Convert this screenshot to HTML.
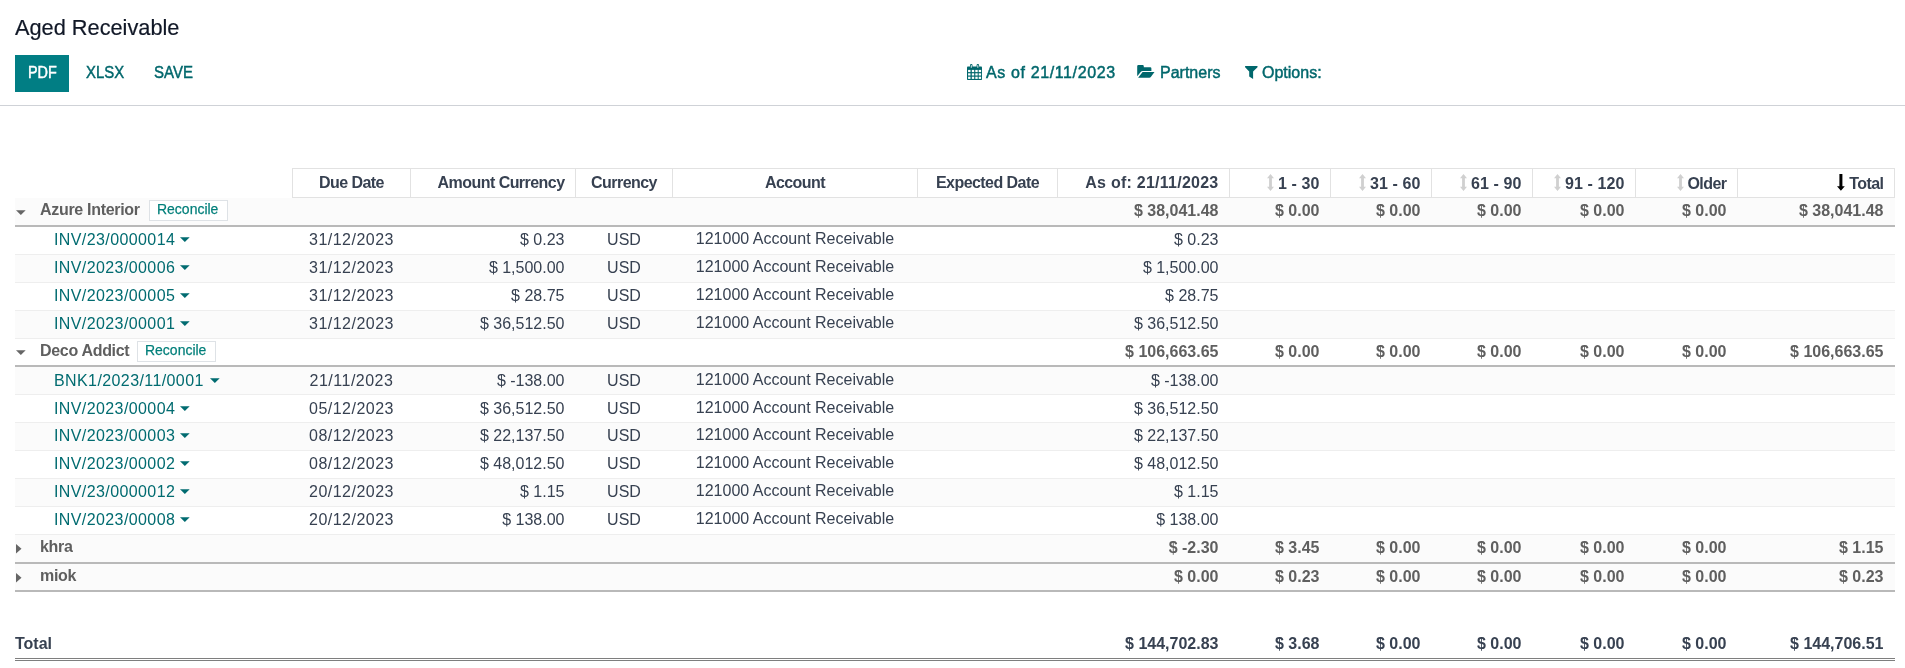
<!DOCTYPE html><html><head><meta charset="utf-8"><title>Aged Receivable</title><style>
*{margin:0;padding:0;box-sizing:border-box}
html,body{width:1905px;height:668px;overflow:hidden;background:#fff}
body{position:relative;font-family:"Liberation Sans",sans-serif;}
#wrap{position:absolute;left:0;top:0;width:1905px;height:668px;will-change:transform}
.t{position:absolute;white-space:nowrap;line-height:20px;font-size:16px}
.r{position:absolute}
svg{position:absolute;overflow:visible}
.title{font-size:21.75px;color:#111827;line-height:26px;-webkit-text-stroke:0.2px #111827}
.btn{font-size:16px;letter-spacing:-0.7px;color:#00676c;-webkit-text-stroke:0.45px #00676c}
.hd{font-weight:bold;color:#374151;letter-spacing:-0.55px}
.gr{font-weight:bold;color:#5f5f5f}
.ln{color:#374151}
.lk{color:#016b70;letter-spacing:0.4px}
.dt{color:#374151;letter-spacing:0.49px}
.tot{font-weight:bold;color:#374151}
.rec{font-size:15px;transform:scaleX(0.932);transform-origin:0 0;color:#007f7a;line-height:16px;-webkit-text-stroke:0.25px #007f7a}
</style></head><body><div id="wrap">
<div class="t title" style="left:15px;top:14.5px;">Aged Receivable</div>
<div class="r" style="left:15px;top:55px;width:54px;height:37px;background:#017e84;"></div>
<div class="t btn" style="left:28px;top:63px;color:#fff;-webkit-text-stroke:0.45px #fff;letter-spacing:0;transform:scaleX(0.9);transform-origin:0 0">PDF</div>
<div class="t btn" style="left:86px;top:63px;letter-spacing:0;transform:scaleX(0.93);transform-origin:0 0">XLSX</div>
<div class="t btn" style="left:154px;top:63px;letter-spacing:0;transform:scaleX(0.937);transform-origin:0 0">SAVE</div>
<svg style="left:967px;top:64px" width="15" height="16" viewBox="0 0 15 16">
<path fill="#00676c" d="M0.8 2.6H14.2Q15 2.6 15 3.4V15.2Q15 16 14.2 16H0.8Q0 16 0 15.2V3.4Q0 2.6 0.8 2.6z"/>
<path fill="#00676c" d="M3 1.3Q3 0 4.25 0Q5.5 0 5.5 1.3V4.4H3z M9.6 1.3Q9.6 0 10.85 0Q12.1 0 12.1 1.3V4.4H9.6z"/>
<path fill="#fff" d="M3.8 1.6Q3.8 0.9 4.25 0.9Q4.7 0.9 4.7 1.6V3.7H3.8z M10.4 1.6Q10.4 0.9 10.85 0.9Q11.3 0.9 11.3 1.6V3.7H10.4z"/>
<g fill="#fff"><rect x="1.1" y="5.9" width="2.4" height="2.2"/><rect x="4.8" y="5.9" width="2.4" height="2.2"/><rect x="8.3" y="5.9" width="2.4" height="2.2"/><rect x="11.7" y="5.9" width="2.4" height="2.2"/><rect x="1.1" y="9.3" width="2.4" height="2.2"/><rect x="4.8" y="9.3" width="2.4" height="2.2"/><rect x="8.3" y="9.3" width="2.4" height="2.2"/><rect x="11.7" y="9.3" width="2.4" height="2.2"/><rect x="1.1" y="12.7" width="2.4" height="2.2"/><rect x="4.8" y="12.7" width="2.4" height="2.2"/><rect x="8.3" y="12.7" width="2.4" height="2.2"/><rect x="11.7" y="12.7" width="2.4" height="2.2"/></g></svg>
<div class="t btn" style="left:986px;top:63px;letter-spacing:0.62px">As of 21/11/2023</div>
<svg style="left:1137px;top:65px" width="18" height="13" viewBox="0 0 18 13">
<path fill="#00676c" d="M0.2 1.2Q0.2 0 1.4 0H5.6Q6.8 0 6.8 1.2V2.3H13.2Q14.4 2.3 14.4 3.5V5.9H5.6Q4.6 5.9 3.9 6.7L0.2 11.2z"/>
<path fill="#00676c" d="M5.6 7.1H17.5L13.8 12Q13.3 12.7 12.4 12.7H1.1z"/>
</svg>
<div class="t btn" style="left:1160px;top:63px;letter-spacing:0.0px">Partners</div>
<svg style="left:1245px;top:66px" width="13" height="13" viewBox="0 0 13 13">
<path fill="#00676c" d="M0.1 0H12.5V1.3L8.1 5.6V12.9L4.2 10.4V5.6L0.1 1.3z"/>
</svg>
<div class="t btn" style="left:1262px;top:63px;letter-spacing:0.0px">Options:</div>
<div class="r" style="left:0px;top:105px;width:1905px;height:1px;background:#cfd2d7;"></div>
<div class="r" style="left:292px;top:168px;width:1603px;height:30px;border:1px solid #e2e2e2"></div>
<div class="r" style="left:410px;top:168px;width:1px;height:30px;background:#e2e2e2;"></div>
<div class="r" style="left:575px;top:168px;width:1px;height:30px;background:#e2e2e2;"></div>
<div class="r" style="left:672px;top:168px;width:1px;height:30px;background:#e2e2e2;"></div>
<div class="r" style="left:917px;top:168px;width:1px;height:30px;background:#e2e2e2;"></div>
<div class="r" style="left:1057px;top:168px;width:1px;height:30px;background:#e2e2e2;"></div>
<div class="r" style="left:1229px;top:168px;width:1px;height:30px;background:#e2e2e2;"></div>
<div class="r" style="left:1330px;top:168px;width:1px;height:30px;background:#e2e2e2;"></div>
<div class="r" style="left:1431px;top:168px;width:1px;height:30px;background:#e2e2e2;"></div>
<div class="r" style="left:1532px;top:168px;width:1px;height:30px;background:#e2e2e2;"></div>
<div class="r" style="left:1635px;top:168px;width:1px;height:30px;background:#e2e2e2;"></div>
<div class="r" style="left:1737px;top:168px;width:1px;height:30px;background:#e2e2e2;"></div>
<div class="t hd" style="left:151.5px;width:400px;top:173px;text-align:center;">Due Date</div>
<div class="t hd" style="right:1340.5px;top:173px;text-align:right;">Amount Currency</div>
<div class="t hd" style="left:424.0px;width:400px;top:173px;text-align:center;">Currency</div>
<div class="t hd" style="left:595.0px;width:400px;top:173px;text-align:center;">Account</div>
<div class="t hd" style="left:787.5px;width:400px;top:173px;text-align:center;">Expected Date</div>
<div class="t hd" style="right:686.5px;top:173px;text-align:right;letter-spacing:0.25px">As of: 21/11/2023</div>
<div class="t hd" style="right:585.5px;top:174px;text-align:right;letter-spacing:0.1px">1 - 30</div>
<div class="t hd" style="right:484.5px;top:174px;text-align:right;letter-spacing:0.1px">31 - 60</div>
<div class="t hd" style="right:383.5px;top:174px;text-align:right;letter-spacing:0.1px">61 - 90</div>
<div class="t hd" style="right:280.5px;top:174px;text-align:right;letter-spacing:0.1px">91 - 120</div>
<div class="t hd" style="right:178.5px;top:174px;text-align:right;">Older</div>
<svg style="left:1266.5px;top:174px" width="7" height="17" viewBox="0 0 7 17"><path fill="#d0d0d0" d="M3.5 0L7 4.3H4.9V12.7H7L3.5 17L0 12.7H2.1V4.3H0z"/></svg>
<svg style="left:1358.5px;top:174px" width="7" height="17" viewBox="0 0 7 17"><path fill="#d0d0d0" d="M3.5 0L7 4.3H4.9V12.7H7L3.5 17L0 12.7H2.1V4.3H0z"/></svg>
<svg style="left:1460px;top:174px" width="7" height="17" viewBox="0 0 7 17"><path fill="#d0d0d0" d="M3.5 0L7 4.3H4.9V12.7H7L3.5 17L0 12.7H2.1V4.3H0z"/></svg>
<svg style="left:1553.5px;top:174px" width="7" height="17" viewBox="0 0 7 17"><path fill="#d0d0d0" d="M3.5 0L7 4.3H4.9V12.7H7L3.5 17L0 12.7H2.1V4.3H0z"/></svg>
<svg style="left:1676.5px;top:174px" width="7" height="17" viewBox="0 0 7 17"><path fill="#d0d0d0" d="M3.5 0L7 4.3H4.9V12.7H7L3.5 17L0 12.7H2.1V4.3H0z"/></svg>
<svg style="left:1836.7px;top:174px" width="8" height="17" viewBox="0 0 8 17"><path fill="#000" d="M2.4 0H5.4V12.2H7.8L3.9 16.8L0 12.2H2.4z"/></svg>
<div class="t hd" style="right:21.5px;top:174px;text-align:right;">Total</div>
<div class="r" style="left:15px;top:198px;width:1880px;height:27px;background:#fbfbfb;"></div>
<div class="r" style="left:15px;top:225px;width:1880px;height:2px;background:#b9b9b9;"></div>
<svg style="left:16px;top:210px" width="9.7" height="5.2" viewBox="0 0 10 5"><path fill="#666666" d="M0 0H10L5 5z"/></svg>
<div class="t gr" style="left:40px;top:200px;letter-spacing:-0.31px">Azure Interior</div>
<div class="r" style="left:149px;top:200px;width:79px;height:21px;border:1px solid #dee2e6;background:#fff"></div>
<div class="t rec" style="left:157px;top:201px;">Reconcile</div>
<div class="t gr" style="right:686.5px;top:201px;text-align:right;">$ 38,041.48</div>
<div class="t gr" style="right:585.5px;top:201px;text-align:right;">$ 0.00</div>
<div class="t gr" style="right:484.5px;top:201px;text-align:right;">$ 0.00</div>
<div class="t gr" style="right:383.5px;top:201px;text-align:right;">$ 0.00</div>
<div class="t gr" style="right:280.5px;top:201px;text-align:right;">$ 0.00</div>
<div class="t gr" style="right:178.5px;top:201px;text-align:right;">$ 0.00</div>
<div class="t gr" style="right:21.5px;top:201px;text-align:right;">$ 38,041.48</div>
<div class="r" style="left:15px;top:254px;width:1880px;height:1px;background:#eeeeee;"></div>
<div class="t lk" style="left:54px;top:230px;">INV/23/0000014</div>
<svg style="left:180px;top:237px" width="9.7" height="5.2" viewBox="0 0 10 5"><path fill="#016b70" d="M0 0H10L5 5z"/></svg>
<div class="t dt" style="left:151.5px;width:400px;top:230px;text-align:center;">31/12/2023</div>
<div class="t ln" style="right:1340.5px;top:230px;text-align:right;">$ 0.23</div>
<div class="t ln" style="left:424.0px;width:400px;top:230px;text-align:center;">USD</div>
<div class="t ln" style="left:595.0px;width:400px;top:229px;text-align:center;">121000 Account Receivable</div>
<div class="t ln" style="right:686.5px;top:230px;text-align:right;">$ 0.23</div>
<div class="r" style="left:15px;top:255px;width:1880px;height:27px;background:#fbfbfb;"></div>
<div class="r" style="left:15px;top:282px;width:1880px;height:1px;background:#eeeeee;"></div>
<div class="t lk" style="left:54px;top:258px;">INV/2023/00006</div>
<svg style="left:180px;top:265px" width="9.7" height="5.2" viewBox="0 0 10 5"><path fill="#016b70" d="M0 0H10L5 5z"/></svg>
<div class="t dt" style="left:151.5px;width:400px;top:258px;text-align:center;">31/12/2023</div>
<div class="t ln" style="right:1340.5px;top:258px;text-align:right;">$ 1,500.00</div>
<div class="t ln" style="left:424.0px;width:400px;top:258px;text-align:center;">USD</div>
<div class="t ln" style="left:595.0px;width:400px;top:257px;text-align:center;">121000 Account Receivable</div>
<div class="t ln" style="right:686.5px;top:258px;text-align:right;">$ 1,500.00</div>
<div class="r" style="left:15px;top:310px;width:1880px;height:1px;background:#eeeeee;"></div>
<div class="t lk" style="left:54px;top:286px;">INV/2023/00005</div>
<svg style="left:180px;top:293px" width="9.7" height="5.2" viewBox="0 0 10 5"><path fill="#016b70" d="M0 0H10L5 5z"/></svg>
<div class="t dt" style="left:151.5px;width:400px;top:286px;text-align:center;">31/12/2023</div>
<div class="t ln" style="right:1340.5px;top:286px;text-align:right;">$ 28.75</div>
<div class="t ln" style="left:424.0px;width:400px;top:286px;text-align:center;">USD</div>
<div class="t ln" style="left:595.0px;width:400px;top:285px;text-align:center;">121000 Account Receivable</div>
<div class="t ln" style="right:686.5px;top:286px;text-align:right;">$ 28.75</div>
<div class="r" style="left:15px;top:311px;width:1880px;height:27px;background:#fbfbfb;"></div>
<div class="r" style="left:15px;top:338px;width:1880px;height:1px;background:#eeeeee;"></div>
<div class="t lk" style="left:54px;top:314px;">INV/2023/00001</div>
<svg style="left:180px;top:321px" width="9.7" height="5.2" viewBox="0 0 10 5"><path fill="#016b70" d="M0 0H10L5 5z"/></svg>
<div class="t dt" style="left:151.5px;width:400px;top:314px;text-align:center;">31/12/2023</div>
<div class="t ln" style="right:1340.5px;top:314px;text-align:right;">$ 36,512.50</div>
<div class="t ln" style="left:424.0px;width:400px;top:314px;text-align:center;">USD</div>
<div class="t ln" style="left:595.0px;width:400px;top:313px;text-align:center;">121000 Account Receivable</div>
<div class="t ln" style="right:686.5px;top:314px;text-align:right;">$ 36,512.50</div>
<div class="r" style="left:15px;top:365px;width:1880px;height:2px;background:#b9b9b9;"></div>
<svg style="left:16px;top:349.6px" width="9.7" height="5.2" viewBox="0 0 10 5"><path fill="#666666" d="M0 0H10L5 5z"/></svg>
<div class="t gr" style="left:40px;top:341px;letter-spacing:-0.31px">Deco Addict</div>
<div class="r" style="left:137px;top:341px;width:79px;height:21px;border:1px solid #dee2e6;background:#fff"></div>
<div class="t rec" style="left:145px;top:342px;">Reconcile</div>
<div class="t gr" style="right:686.5px;top:342px;text-align:right;">$ 106,663.65</div>
<div class="t gr" style="right:585.5px;top:342px;text-align:right;">$ 0.00</div>
<div class="t gr" style="right:484.5px;top:342px;text-align:right;">$ 0.00</div>
<div class="t gr" style="right:383.5px;top:342px;text-align:right;">$ 0.00</div>
<div class="t gr" style="right:280.5px;top:342px;text-align:right;">$ 0.00</div>
<div class="t gr" style="right:178.5px;top:342px;text-align:right;">$ 0.00</div>
<div class="t gr" style="right:21.5px;top:342px;text-align:right;">$ 106,663.65</div>
<div class="r" style="left:15px;top:367px;width:1880px;height:27px;background:#fbfbfb;"></div>
<div class="r" style="left:15px;top:394px;width:1880px;height:1px;background:#eeeeee;"></div>
<div class="t lk" style="left:54px;top:371px;">BNK1/2023/11/0001</div>
<svg style="left:209.8px;top:378px" width="9.7" height="5.2" viewBox="0 0 10 5"><path fill="#016b70" d="M0 0H10L5 5z"/></svg>
<div class="t dt" style="left:151.5px;width:400px;top:371px;text-align:center;">21/11/2023</div>
<div class="t ln" style="right:1340.5px;top:371px;text-align:right;">$ -138.00</div>
<div class="t ln" style="left:424.0px;width:400px;top:371px;text-align:center;">USD</div>
<div class="t ln" style="left:595.0px;width:400px;top:370px;text-align:center;">121000 Account Receivable</div>
<div class="t ln" style="right:686.5px;top:371px;text-align:right;">$ -138.00</div>
<div class="r" style="left:15px;top:422px;width:1880px;height:1px;background:#eeeeee;"></div>
<div class="t lk" style="left:54px;top:399px;">INV/2023/00004</div>
<svg style="left:180px;top:406px" width="9.7" height="5.2" viewBox="0 0 10 5"><path fill="#016b70" d="M0 0H10L5 5z"/></svg>
<div class="t dt" style="left:151.5px;width:400px;top:399px;text-align:center;">05/12/2023</div>
<div class="t ln" style="right:1340.5px;top:399px;text-align:right;">$ 36,512.50</div>
<div class="t ln" style="left:424.0px;width:400px;top:399px;text-align:center;">USD</div>
<div class="t ln" style="left:595.0px;width:400px;top:398px;text-align:center;">121000 Account Receivable</div>
<div class="t ln" style="right:686.5px;top:399px;text-align:right;">$ 36,512.50</div>
<div class="r" style="left:15px;top:423px;width:1880px;height:27px;background:#fbfbfb;"></div>
<div class="r" style="left:15px;top:450px;width:1880px;height:1px;background:#eeeeee;"></div>
<div class="t lk" style="left:54px;top:426px;">INV/2023/00003</div>
<svg style="left:180px;top:433px" width="9.7" height="5.2" viewBox="0 0 10 5"><path fill="#016b70" d="M0 0H10L5 5z"/></svg>
<div class="t dt" style="left:151.5px;width:400px;top:426px;text-align:center;">08/12/2023</div>
<div class="t ln" style="right:1340.5px;top:426px;text-align:right;">$ 22,137.50</div>
<div class="t ln" style="left:424.0px;width:400px;top:426px;text-align:center;">USD</div>
<div class="t ln" style="left:595.0px;width:400px;top:425px;text-align:center;">121000 Account Receivable</div>
<div class="t ln" style="right:686.5px;top:426px;text-align:right;">$ 22,137.50</div>
<div class="r" style="left:15px;top:478px;width:1880px;height:1px;background:#eeeeee;"></div>
<div class="t lk" style="left:54px;top:454px;">INV/2023/00002</div>
<svg style="left:180px;top:461px" width="9.7" height="5.2" viewBox="0 0 10 5"><path fill="#016b70" d="M0 0H10L5 5z"/></svg>
<div class="t dt" style="left:151.5px;width:400px;top:454px;text-align:center;">08/12/2023</div>
<div class="t ln" style="right:1340.5px;top:454px;text-align:right;">$ 48,012.50</div>
<div class="t ln" style="left:424.0px;width:400px;top:454px;text-align:center;">USD</div>
<div class="t ln" style="left:595.0px;width:400px;top:453px;text-align:center;">121000 Account Receivable</div>
<div class="t ln" style="right:686.5px;top:454px;text-align:right;">$ 48,012.50</div>
<div class="r" style="left:15px;top:479px;width:1880px;height:27px;background:#fbfbfb;"></div>
<div class="r" style="left:15px;top:506px;width:1880px;height:1px;background:#eeeeee;"></div>
<div class="t lk" style="left:54px;top:482px;">INV/23/0000012</div>
<svg style="left:180px;top:489px" width="9.7" height="5.2" viewBox="0 0 10 5"><path fill="#016b70" d="M0 0H10L5 5z"/></svg>
<div class="t dt" style="left:151.5px;width:400px;top:482px;text-align:center;">20/12/2023</div>
<div class="t ln" style="right:1340.5px;top:482px;text-align:right;">$ 1.15</div>
<div class="t ln" style="left:424.0px;width:400px;top:482px;text-align:center;">USD</div>
<div class="t ln" style="left:595.0px;width:400px;top:481px;text-align:center;">121000 Account Receivable</div>
<div class="t ln" style="right:686.5px;top:482px;text-align:right;">$ 1.15</div>
<div class="r" style="left:15px;top:534px;width:1880px;height:1px;background:#eeeeee;"></div>
<div class="t lk" style="left:54px;top:510px;">INV/2023/00008</div>
<svg style="left:180px;top:517px" width="9.7" height="5.2" viewBox="0 0 10 5"><path fill="#016b70" d="M0 0H10L5 5z"/></svg>
<div class="t dt" style="left:151.5px;width:400px;top:510px;text-align:center;">20/12/2023</div>
<div class="t ln" style="right:1340.5px;top:510px;text-align:right;">$ 138.00</div>
<div class="t ln" style="left:424.0px;width:400px;top:510px;text-align:center;">USD</div>
<div class="t ln" style="left:595.0px;width:400px;top:509px;text-align:center;">121000 Account Receivable</div>
<div class="t ln" style="right:686.5px;top:510px;text-align:right;">$ 138.00</div>
<div class="r" style="left:15px;top:535px;width:1880px;height:27px;background:#fbfbfb;"></div>
<div class="r" style="left:15px;top:562px;width:1880px;height:2px;background:#b9b9b9;"></div>
<svg style="left:16px;top:543.5px" width="5.5" height="9.5" viewBox="0 0 5.5 9.5"><path fill="#666666" d="M0 0L5.5 4.75L0 9.5z"/></svg>
<div class="t gr" style="left:40px;top:537px;letter-spacing:-0.31px">khra</div>
<div class="t gr" style="right:686.5px;top:538px;text-align:right;">$ -2.30</div>
<div class="t gr" style="right:585.5px;top:538px;text-align:right;">$ 3.45</div>
<div class="t gr" style="right:484.5px;top:538px;text-align:right;">$ 0.00</div>
<div class="t gr" style="right:383.5px;top:538px;text-align:right;">$ 0.00</div>
<div class="t gr" style="right:280.5px;top:538px;text-align:right;">$ 0.00</div>
<div class="t gr" style="right:178.5px;top:538px;text-align:right;">$ 0.00</div>
<div class="t gr" style="right:21.5px;top:538px;text-align:right;">$ 1.15</div>
<div class="r" style="left:15px;top:564px;width:1880px;height:26px;background:#fbfbfb;"></div>
<div class="r" style="left:15px;top:590px;width:1880px;height:2px;background:#b9b9b9;"></div>
<svg style="left:16px;top:572.5px" width="5.5" height="9.5" viewBox="0 0 5.5 9.5"><path fill="#666666" d="M0 0L5.5 4.75L0 9.5z"/></svg>
<div class="t gr" style="left:40px;top:566px;letter-spacing:-0.31px">miok</div>
<div class="t gr" style="right:686.5px;top:567px;text-align:right;">$ 0.00</div>
<div class="t gr" style="right:585.5px;top:567px;text-align:right;">$ 0.23</div>
<div class="t gr" style="right:484.5px;top:567px;text-align:right;">$ 0.00</div>
<div class="t gr" style="right:383.5px;top:567px;text-align:right;">$ 0.00</div>
<div class="t gr" style="right:280.5px;top:567px;text-align:right;">$ 0.00</div>
<div class="t gr" style="right:178.5px;top:567px;text-align:right;">$ 0.00</div>
<div class="t gr" style="right:21.5px;top:567px;text-align:right;">$ 0.23</div>
<div class="t tot" style="left:15px;top:634px;">Total</div>
<div class="t tot" style="right:686.5px;top:634px;text-align:right;">$ 144,702.83</div>
<div class="t tot" style="right:585.5px;top:634px;text-align:right;">$ 3.68</div>
<div class="t tot" style="right:484.5px;top:634px;text-align:right;">$ 0.00</div>
<div class="t tot" style="right:383.5px;top:634px;text-align:right;">$ 0.00</div>
<div class="t tot" style="right:280.5px;top:634px;text-align:right;">$ 0.00</div>
<div class="t tot" style="right:178.5px;top:634px;text-align:right;">$ 0.00</div>
<div class="t tot" style="right:21.5px;top:634px;text-align:right;">$ 144,706.51</div>
<div class="r" style="left:15px;top:658px;width:1880px;height:1px;background:#7e7e7e;"></div>
<div class="r" style="left:15px;top:660px;width:1880px;height:1px;background:#7e7e7e;"></div>
</div></body></html>
